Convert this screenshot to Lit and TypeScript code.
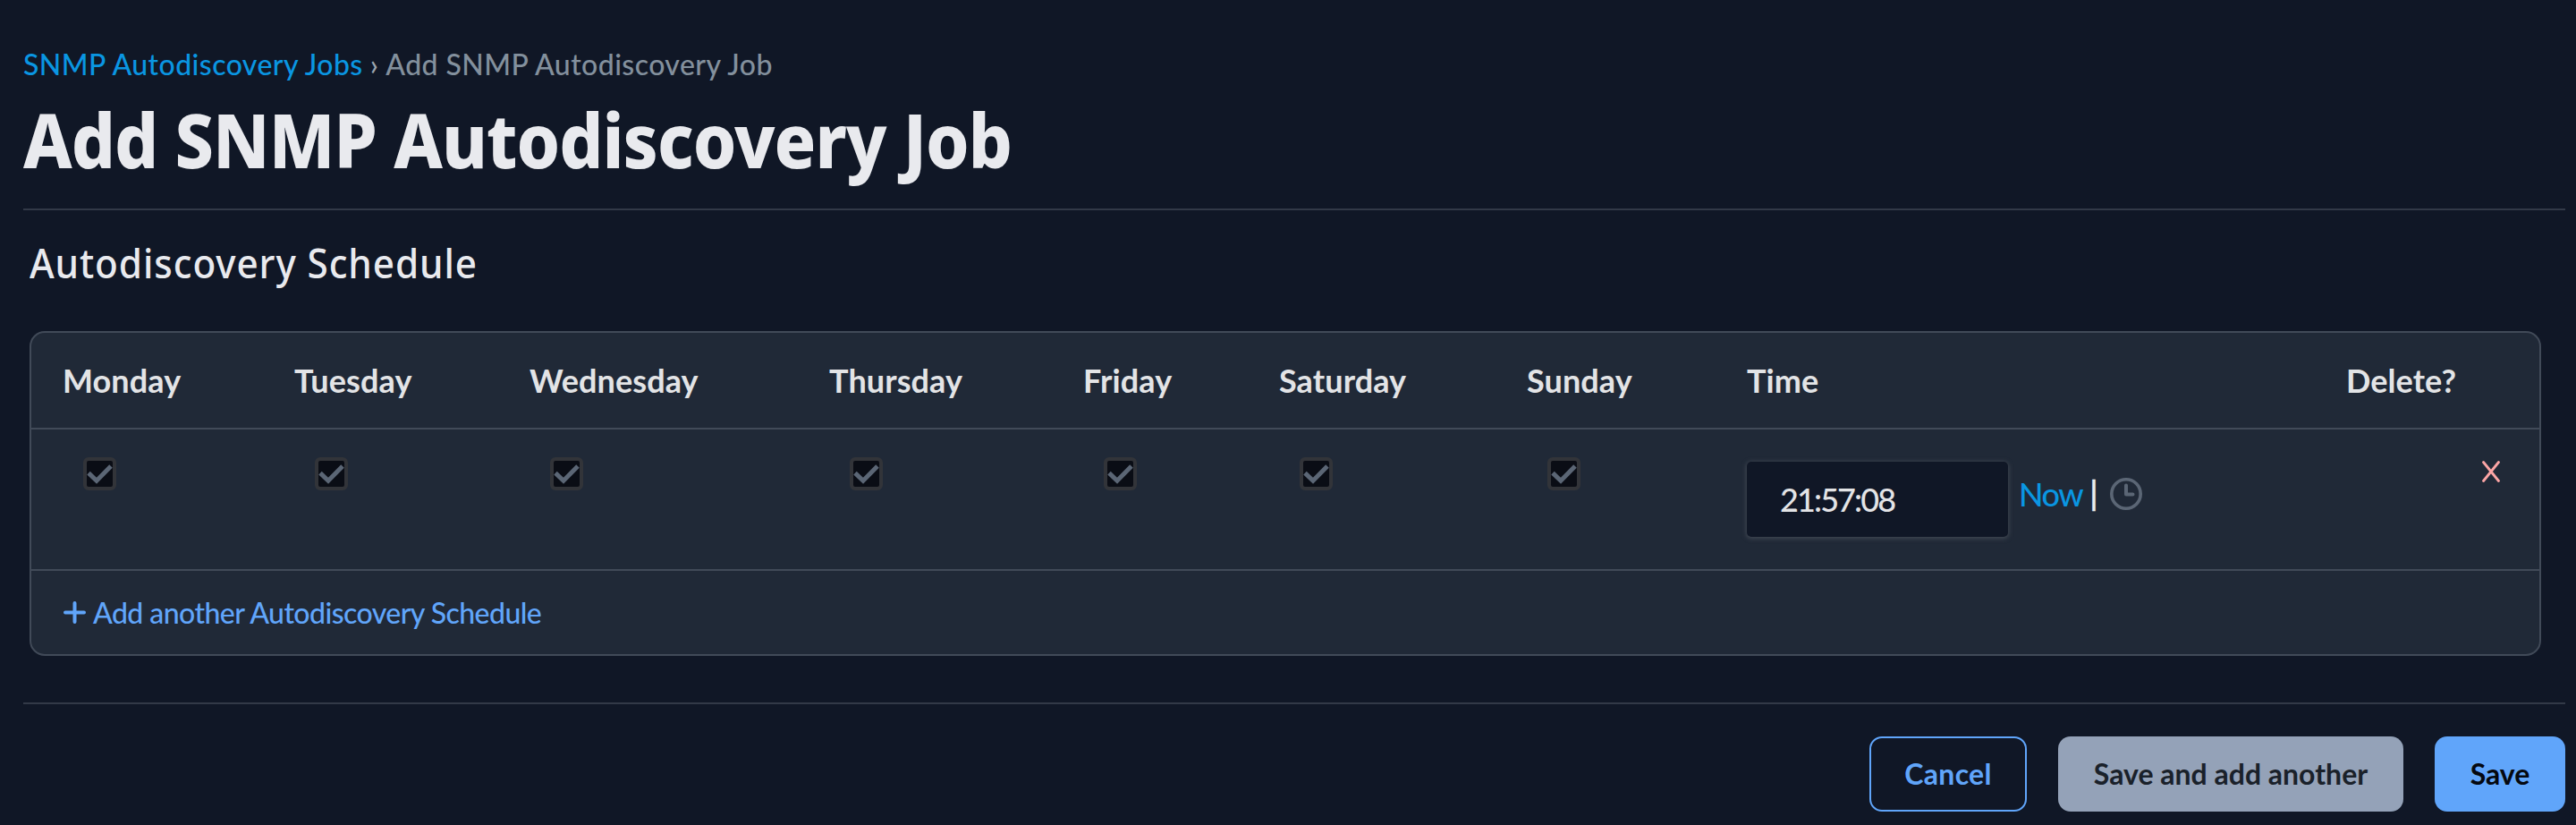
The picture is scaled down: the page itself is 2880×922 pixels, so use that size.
import { LitElement, html, css } from "lit";
import { customElement, property } from "lit/decorators.js";

const DAYS = ["Monday", "Tuesday", "Wednesday", "Thursday", "Friday", "Saturday", "Sunday"];

@customElement("day-check")
class DayCheck extends LitElement {
  @property({ type: Boolean }) checked = false;

  static styles = css`
    :host { display: block; }
    .box {
      box-sizing: border-box;
      width: 37px;
      height: 37px;
      border: 4px solid #323439;
      border-radius: 6px;
      background: #0a0d15;
    }
    .mark { display: block; width: 29px; height: 29px; }
  `;

  render() {
    return html`<div class="box" role="checkbox" aria-checked=${this.checked}>
      ${this.checked
        ? html`<svg class="mark" viewBox="0 0 29 29">
            <path d="M2 13.6 L11 22.3 L27 6" fill="none" stroke="#5b6675" stroke-width="5" />
          </svg>`
        : ""}
    </div>`;
  }
}

@customElement("app-root")
class AppRoot extends LitElement {
  static styles = css`
    :host {
      display: block;
      box-sizing: border-box;
      height: 922px;
      padding: 52px 12px 0 26px;
      background: #101726;
      color: #ebecf0;
      font-family: Lato, "Open Sans", sans-serif;
      font-weight: 500;
      overflow: hidden;
    }
    .crumbs {
      display: flex;
      height: 40px;
      line-height: 40px;
      font-size: 32px;
      letter-spacing: 0.44px;
      color: #83909d;
      white-space: pre;
    }
    .crumbs .link { color: #0a96e2; }
    .crumbs .sep { margin: 0 8px 0 8px; color: #9aa4ae; }
    h1 {
      margin: 14px 0 27px;
      height: 100px;
      font: 800 83px/100px "Noto Sans", sans-serif;
      letter-spacing: -1px;
      transform: scaleX(0.931);
      transform-origin: left;
      color: #e9eaee;
      white-space: nowrap;
    }
    .rule { height: 2px; background: #323947; }
    .section { padding: 29px 27px 0 7px; }
    h2 {
      margin: 0 0 46px;
      height: 60px;
      font: 500 45px/60px "Noto Sans", sans-serif;
      letter-spacing: 1px;
      transform: scaleX(0.938);
      transform-origin: left;
      color: #e9eaee;
    }
    .card {
      border: 2px solid #414a58;
      border-radius: 17px;
      background: #202937;
      overflow: hidden;
    }
    .row {
      display: grid;
      grid-template-columns: 259px 263px 335px 284px 219px 277px 246px 670px 1fr;
      padding-left: 34px;
      border-bottom: 2px solid #414a58;
    }
    .head {
      height: 106px;
      line-height: 106px;
      font-size: 36px;
      font-weight: 700;
      letter-spacing: 0.1px;
      text-indent: 1px;
      color: #e3e4e6;
    }
    .body { height: 156px; }
    .check { padding: 31px 0 0 24px; }
    .time { display: flex; align-items: flex-start; padding-top: 36px; font-size: 36px; }
    .input {
      box-sizing: border-box;
      width: 292px;
      height: 84px;
      margin-left: 1px;
      padding-left: 37px;
      line-height: 84px;
      letter-spacing: -1.9px;
      border-radius: 5px;
      background: #101726;
      color: #e3e4e6;
      box-shadow: 0 1px 5px 1px #414853;
    }
    .now { margin-left: 12px; line-height: 73px; letter-spacing: -1.5px; color: #0a96e2; }
    .bar { margin: 0 13px 0 8px; font: 400 36px/69px "Liberation Sans", sans-serif; -webkit-text-stroke: 0.5px; }
    .clock { width: 36px; height: 36px; margin-top: 18px; }
    .delete { display: flex; justify-content: flex-end; padding: 35px 44px 0 0; }
    .cross { width: 20px; height: 24px; }
    .add {
      display: flex;
      align-items: center;
      height: 93px;
      padding-left: 36px;
      font-size: 32px;
      letter-spacing: -0.55px;
      color: #60a5fa;
    }
    .plus { width: 25px; height: 25px; margin-right: 8px; }
    .lower { margin-top: 52px; }
    .actions { display: flex; justify-content: flex-end; gap: 35px; padding-top: 36px; }
    .btn {
      box-sizing: border-box;
      height: 84px;
      line-height: 83px;
      border-radius: 14px;
      font-size: 32px;
      font-weight: 700;
      text-align: center;
    }
    .cancel { width: 176px; line-height: 79px; border: 2px solid #60a5fa; color: #60a5fa; letter-spacing: 0.3px; }
    .another { width: 386px; background: #94a2b8; color: #1a212a; }
    .save { width: 146px; background: #60a5fa; color: #05080f; }
  `;

  render() {
    return html`
      <nav class="crumbs"><span class="link">SNMP Autodiscovery Jobs</span><span class="sep">›</span><span>Add SNMP Autodiscovery Job</span></nav>
      <h1>Add SNMP Autodiscovery Job</h1>
      <div class="rule"></div>
      <section class="section">
        <h2>Autodiscovery Schedule</h2>
        <div class="card">
          <div class="row head">
            ${[...DAYS, "Time", "Delete?"].map((label) => html`<div>${label}</div>`)}
          </div>
          <div class="row body">
            ${DAYS.map(() => html`<div class="check"><day-check checked></day-check></div>`)}
            <div class="time">
              <div class="input">21:57:08</div>
              <span class="now">Now</span><span class="bar">|</span>
              <svg class="clock" viewBox="0 0 36 36" fill="none" stroke="#5b6675">
                <circle cx="18" cy="18" r="16.2" stroke-width="3.6" />
                <path d="M18 8.5 V18.5 H25.5" stroke-width="4" stroke-linecap="round" stroke-linejoin="round" />
              </svg>
            </div>
            <div class="delete">
              <svg class="cross" viewBox="0 0 20 24">
                <path d="M1.5 1.5 L18.5 22.5 M18.5 1.5 L1.5 22.5" stroke="#fca5a5" stroke-width="2.8" stroke-linecap="round" />
              </svg>
            </div>
          </div>
          <div class="add">
            <svg class="plus" viewBox="0 0 25 25">
              <path d="M12.5 2 V23 M2 12.5 H23" stroke="#60a5fa" stroke-width="4" stroke-linecap="round" />
            </svg>
            <span>Add another Autodiscovery Schedule</span>
          </div>
        </div>
      </section>
      <div class="rule lower"></div>
      <div class="actions">
        <div class="btn cancel">Cancel</div>
        <div class="btn another">Save and add another</div>
        <div class="btn save">Save</div>
      </div>
    `;
  }
}
